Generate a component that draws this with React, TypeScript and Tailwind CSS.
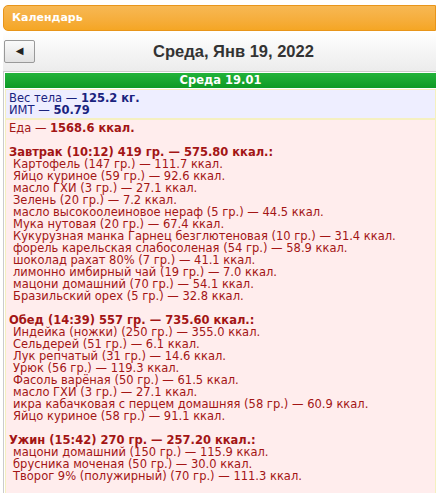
const breakfast = [
  'Картофель (147 гр.) — 111.7 ккал.',
  'Яйцо куриное (59 гр.) — 92.6 ккал.',
  'масло ГХИ (3 гр.) — 27.1 ккал.',
  'Зелень (20 гр.) — 7.2 ккал.',
  'масло высокоолеиновое нераф (5 гр.) — 44.5 ккал.',
  'Мука нутовая (20 гр.) — 67.4 ккал.',
  'Кукурузная манка Гарнец безглютеновая (10 гр.) — 31.4 ккал.',
  'форель карельская слабосоленая (54 гр.) — 58.9 ккал.',
  'шоколад рахат 80% (7 гр.) — 41.1 ккал.',
  'лимонно имбирный чай (19 гр.) — 7.0 ккал.',
  'мацони домашний (70 гр.) — 54.1 ккал.',
  'Бразильский орех (5 гр.) — 32.8 ккал.',
];
const lunch = [
  'Индейка (ножки) (250 гр.) — 355.0 ккал.',
  'Сельдерей (51 гр.) — 6.1 ккал.',
  'Лук репчатый (31 гр.) — 14.6 ккал.',
  'Урюк (56 гр.) — 119.3 ккал.',
  'Фасоль варёная (50 гр.) — 61.5 ккал.',
  'масло ГХИ (3 гр.) — 27.1 ккал.',
  'икра кабачковая с перцем домашняя (58 гр.) — 60.9 ккал.',
  'Яйцо куриное (58 гр.) — 91.1 ккал.',
];
const dinner = [
  'мацони домашний (150 гр.) — 115.9 ккал.',
  'брусника моченая (50 гр.) — 30.0 ккал.',
  'Творог 9% (полужирный) (70 гр.) — 111.3 ккал.',
];

function Meal({ title, items }: { title: string; items: string[] }) {
  return (
    <div className="mt-[12px]">
      <div className="font-bold">{title}</div>
      {items.map((t) => (
        <div key={t} className="pl-[4px] whitespace-nowrap">{t}</div>
      ))}
    </div>
  );
}

export default function App() {
  return (
    <div className="w-[436px] h-[493px] overflow-hidden bg-white pl-[3px] pt-[5px] text-[11.5px] leading-[12px]" style={{ fontFamily: '"DejaVu Sans", Tahoma, sans-serif' }}>
      <div className="h-[26px] rounded-l-[5px] bg-gradient-to-b from-[#f7b853] to-[#f5a623] border border-[#e8951a] flex items-center pl-[8px] text-white font-bold text-[11px]">
        Календарь
      </div>
      <div className="h-[40px] bg-gradient-to-b from-white to-[#ececec] flex items-center pl-[1px]">
        <button className="w-[31px] h-[23px] border border-[#999] rounded-[2px] bg-gradient-to-b from-[#fafafa] to-[#e2e2e2] flex items-center justify-center text-[10px] text-[#222]">◀</button>
        <div className="flex-1 text-center text-[16.5px] font-bold text-[#333] pr-[4px]" style={{ fontFamily: '"Liberation Sans", Arial, sans-serif' }}>Среда, Янв 19, 2022</div>
      </div>
      <div className="border-l border-t border-[#ccc] pl-[1px] pt-[1px]">
        <div className="h-[15px] bg-gradient-to-b from-[#22b33a] to-[#0d9a24] text-white font-bold text-center leading-[15px]">Среда 19.01</div>
        <div className="mt-[1px] bg-[#eeeeff] border border-[#f5f0c0] px-[3px] py-[2px] text-[#1a237e]">
          <div>Вес тела — <b>125.2 кг.</b></div>
          <div>ИМТ — <b>50.79</b></div>
        </div>
        <div className="bg-[#ffeded] border border-[#f5f0c0] px-[3px] py-[2px] text-[#a31515] h-[390px]">
          <div>Еда — <b>1568.6 ккал.</b></div>
          <Meal title="Завтрак (10:12) 419 гр. — 575.80 ккал.:" items={breakfast} />
          <Meal title="Обед (14:39) 557 гр. — 735.60 ккал.:" items={lunch} />
          <Meal title="Ужин (15:42) 270 гр. — 257.20 ккал.:" items={dinner} />
        </div>
      </div>
    </div>
  );
}
